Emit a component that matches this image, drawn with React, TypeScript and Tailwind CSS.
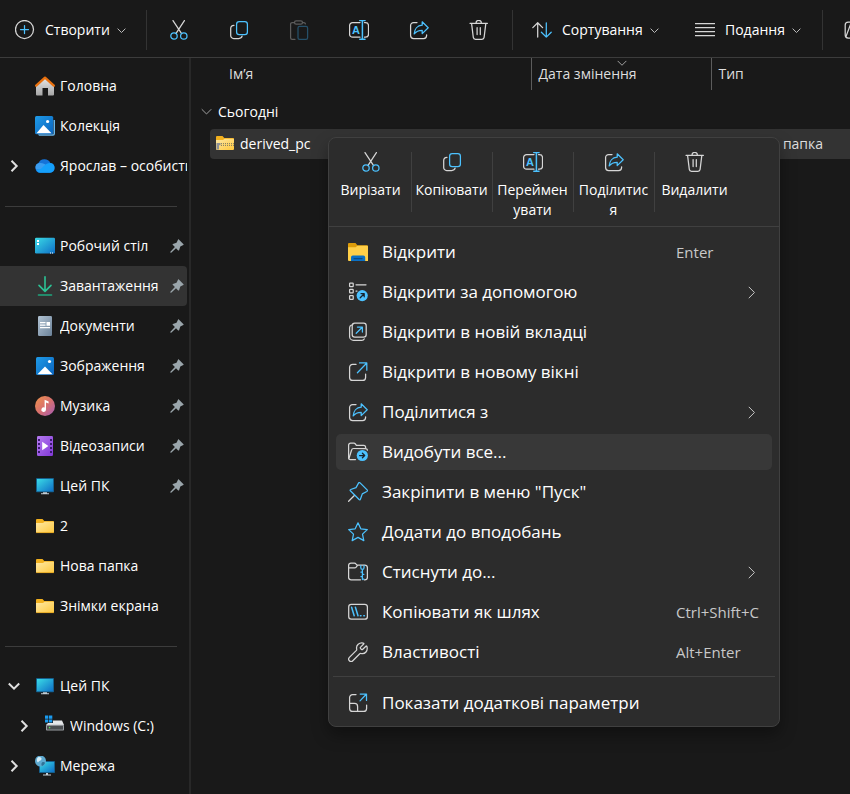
import type { ReactNode } from 'react'

const LIGHT = '#d6d6d6'
const BLUE = '#4cc2ff'

function Icon({ children, className = '' }: { children: ReactNode; className?: string }) {
  return (
    <svg
      viewBox="0 0 20 20"
      className={`size-5 shrink-0 ${className}`}
      fill="none"
      strokeWidth="1.25"
      strokeLinecap="round"
      strokeLinejoin="round"
      aria-hidden="true"
    >
      {children}
    </svg>
  )
}

function Chevron({ className = '' }: { className?: string }) {
  return (
    <svg viewBox="0 0 12 12" className={`shrink-0 ${className}`} fill="none" stroke="currentColor" aria-hidden="true">
      <path d="M.8 3.5L6 8.700l5.200-5.200" vectorEffect="non-scaling-stroke" />
    </svg>
  )
}

/* ---------- Command icons ---------- */

const NewIcon = () => (
  <Icon>
    <circle cx="9.5" cy="9.5" r="9" stroke={LIGHT} />
    <path d="M9.5 5.5v8M5.5 9.5h8" stroke={BLUE} />
  </Icon>
)

const CutIcon = () => (
  <Icon>
    <path d="M4 .6l8.6 13M15.4.6l-8.5 13" stroke={LIGHT} />
    <circle cx="5" cy="16" r="3.2" stroke={BLUE} />
    <circle cx="14.8" cy="16" r="3.2" stroke={BLUE} />
  </Icon>
)

const CopyIcon = () => (
  <Icon>
    <path d="M5 5.3C3 5.4 1.7 6.6 1.7 8.5v7a3 3 0 0 0 3 3h5c1.8 0 3.1-.9 3.4-2.3" stroke={LIGHT} />
    <rect x="7.6" y="1.6" width="10.8" height="13" rx="2.6" stroke={BLUE} />
  </Icon>
)

const PasteIcon = () => (
  <Icon>
    <path d="M5.5 2.5H3.2a1.6 1.6 0 0 0-1.6 1.6v13.6a1.6 1.6 0 0 0 1.6 1.6H6M13.5 2.5h1.3c.9 0 1.5.6 1.6 1.4" stroke="#5c5c5c" />
    <rect x="5.5" y=".8" width="8" height="3.2" rx="1.6" stroke="#5c5c5c" />
    <rect x="9" y="6.4" width="9.6" height="12.9" rx="1.6" stroke="#265069" />
  </Icon>
)

const RenameIcon = () => (
  <Icon>
    <path d="M11 2.6H3.6a3 3 0 0 0-3 3v8.6a3 3 0 0 0 3 3H11M15.5 2.6h1a3 3 0 0 1 3 3v8.6a3 3 0 0 1-3 3h-1" stroke={LIGHT} />
    <path d="M13.4.6v18.6M10.8.6h5.2M10.8 19.2h5.2" stroke={BLUE} strokeWidth="1.5" />
    <text x="3" y="14" fontSize="11" fontWeight="bold" fill={BLUE} fontFamily="Liberation Sans, sans-serif">A</text>
  </Icon>
)

const ShareIcon = () => (
  <Icon>
    <path d="M8 2.5H4.6a3 3 0 0 0-3 3v10a3 3 0 0 0 3 3h10a3 3 0 0 0 3-3v-.7" stroke={LIGHT} />
    <path d="M13.2 1.8l6 5.9-6 5.9v-3.3c-3.4 0-6 .9-8 3.6C5.4 9 8.4 5.5 13.2 5.2z" stroke={BLUE} />
  </Icon>
)

const DeleteIcon = () => (
  <Icon>
    <path d="M1 3.3h17.4M7 3.1a2.7 2.7 0 0 1 5.4 0M2.6 3.6l1.7 13.8a2.2 2.2 0 0 0 2.2 1.9h6.4a2.2 2.2 0 0 0 2.2-1.9l1.7-13.8M8.1 7.6v7M11.3 7.6v7" stroke={LIGHT} />
  </Icon>
)

const SortIcon = () => (
  <Icon>
    <path d="M5.7 17V2.8M.8 7.6l4.9-4.9 4.9 4.9" stroke={LIGHT} />
    <path d="M14.3 2.8V17M9.4 12.2l4.9 4.9 4.9-4.9" stroke={BLUE} />
  </Icon>
)

const ViewIcon = () => (
  <Icon>
    <path d="M.5 3.5h19M.5 7.5h19M.5 11.5h19M.5 15.5h19" stroke={LIGHT} />
  </Icon>
)

const PreviewIcon = () => (
  <Icon>
    <rect x="1.2" y="2" width="17" height="16" rx="3" stroke={LIGHT} />
    <path d="M2 16.5L6.5 4.5l4 7" stroke={LIGHT} />
  </Icon>
)

/* ---------- Context menu icons ---------- */

const ExplorerIcon = () => (
  <Icon>
    <path d="M0 2a1 1 0 0 1 1-1h6.5l1.8 2.2H19a1 1 0 0 1 1 1V9H0z" fill="#dd9c0a" />
    <path d="M0 5.2h7.6l1.8-1.5H19a1 1 0 0 1 1 1V19H1a1 1 0 0 1-1-1z" fill="#ffcf48" />
    <path d="M3 19v-3.600a1.800 1.800 0 0 1 1.800-1.800h10.600a1.800 1.800 0 0 1 1.800 1.800V19z" fill="#0b70c4" />
    <path d="M6 16.600h8" stroke="#0a4a86" />
  </Icon>
)

const OpenWithIcon = () => (
  <Icon>
    <g stroke={LIGHT}>
      <rect x="1.600" y="1" width="3.600" height="3.600" rx=".6" />
      <rect x="1.600" y="7.300" width="3.600" height="3.600" rx=".6" />
      <rect x="1.600" y="13.700" width="3.600" height="3.600" rx=".6" />
      <path d="M8 2.800h10M8 9.100h1" />
    </g>
    <circle cx="14.200" cy="13.600" r="5.600" fill={BLUE} />
    <path d="M12.200 15.800l4-4M13 11.600h3.200v3.200" stroke="#16222c" />
  </Icon>
)

const NewTabIcon = () => (
  <Icon>
    <rect x="4.200" y="1.200" width="14" height="14" rx="2.600" stroke={LIGHT} />
    <path d="M3.400 3.200c-1.100.4-1.800 1.300-1.800 2.600v8.600a3.900 3.900 0 0 0 3.900 3.900h8.300c1.200 0 2-.5 2.400-1.400" stroke={LIGHT} />
    <path d="M8.200 11.300l6-6M9.400 5h5v5" stroke={BLUE} />
  </Icon>
)

const NewWindowIcon = () => (
  <Icon>
    <path d="M8 2.400H4.600a3 3 0 0 0-3 3v10a3 3 0 0 0 3 3h10a3 3 0 0 0 3-3V12" stroke={LIGHT} />
    <path d="M9.400 10.800l9.200-9.600M11.500.9h7.300v7.300" stroke={BLUE} />
  </Icon>
)

const ExtractIcon = () => (
  <Icon>
    <path d="M7.500 17.600H2.200a1.600 1.600 0 0 1-1.600-1.600V3.200a2 2 0 0 1 2-2h3.200c.7 0 1.200.3 1.600.8l1 1.300h7.200a2 2 0 0 1 2 2v.8" stroke={LIGHT} />
    <path d="M1 16.200L3.600 8a2 2 0 0 1 1.900-1.500h11.800c1.300 0 2.100.6 2.100 1.700" stroke={LIGHT} />
    <circle cx="14.300" cy="13.500" r="5.600" fill={BLUE} />
    <path d="M11.600 13.500h5M14.400 11.200l2.300 2.300-2.300 2.300" stroke="#16222c" />
  </Icon>
)

const PinOutlineIcon = () => (
  <Icon>
    <path d="M.6 19.300l6-6" stroke={LIGHT} />
    <path d="M12.100.9l7 7c.6.6.4 1.200-.3 1.600l-4.500 2.400-1.900 5.300c-.3.7-.8.8-1.300.3L2.400 8.800c-.5-.5-.4-1.100.3-1.300L8 5.600 10.500 1.100c.4-.7 1-.8 1.600-.2z" stroke={BLUE} />
  </Icon>
)

const StarIcon = () => (
  <Icon>
    <path d="M10 .8l2.800 6 6.500.8-4.800 4.500 1.300 6.500L10 15.400l-5.800 3.200 1.300-6.500L.7 7.600l6.500-.8z" stroke={BLUE} />
  </Icon>
)

const CompressIcon = () => (
  <Icon>
    <path d="M12.500 17.800H3.200a2.600 2.600 0 0 1-2.600-2.600V3.600A2.400 2.400 0 0 1 3 1.200h3.300c.8 0 1.400.3 1.800.9l.9 1.100h7.800a2.600 2.600 0 0 1 2.600 2.600v9.400a2.600 2.600 0 0 1-2.600 2.600h-.6M.8 5.900h5.800c.7 0 1.200-.3 1.600-.8l1.300-1.700" stroke={LIGHT} />
    <path d="M12.800 3.500v2.300a1.600 1.600 0 0 0 3.200 0V3.500M14.400 7.500v10M12.900 10h1.500M14.400 12.300h1.500M12.900 14.600h1.500M14.400 17h1.500" stroke={BLUE} />
  </Icon>
)

const PathIcon = () => (
  <Icon>
    <rect x=".7" y="2.400" width="18.700" height="14.800" rx="2.600" stroke={LIGHT} />
    <path d="M3.600 5.200l2.600 8.600M7.400 5.200l2.600 8.600M12.400 13.800h.6M15.800 13.800h.6" stroke={BLUE} strokeWidth="1.500" />
  </Icon>
)

const WrenchIcon = () => (
  <Icon>
    <path d="M17.900 4.200l-3.100 3.100c-.5.5-1 .5-1.500 0l-.7-.7c-.5-.5-.5-1 0-1.500l3.100-3.100c.4-.4.200-.8-.3-.9-3.900-1-7.700 2-6.700 6.100.1.500 0 .8-.3 1.200l-7 7a2.400 2.400 0 0 0 3.400 3.400l7-7c.4-.4.7-.5 1.200-.3 4.100 1.100 7.200-2.800 5.900-7-.2-.5-.6-.7-1-.3z" stroke={LIGHT} />
  </Icon>
)

const MoreOptionsIcon = () => (
  <Icon>
    <path d="M8 1.600H4.600a3 3 0 0 0-3 3v10.800a3 3 0 0 0 3 3h11a3 3 0 0 0 3-3V12M1.600 10.400h5a3 3 0 0 1 3 3v5" stroke={LIGHT} />
    <path d="M12 7.900l6.300-6.600M12.200 1.100h6.300v6.300" stroke={BLUE} />
  </Icon>
)

/* ---------- Navigation pane icons ---------- */

const HomeIcon = () => (
  <Icon>
    <defs>
      <linearGradient id="wall" x1="0" y1="0" x2="0" y2="1">
        <stop stopColor="#e8e8e8" />
        <stop offset="1" stopColor="#a6a6a6" />
      </linearGradient>
    </defs>
    <path d="M1 9.500L10 1.500l9 8V18.500a1 1 0 0 1-1 1h-5V12H7.500v7.500H2a1 1 0 0 1-1-1z" fill="url(#wall)" />
    <path d="M1.200 9.600L10 1.700l8.800 7.900" stroke="#e8700e" strokeWidth="2.400" />
  </Icon>
)

const GalleryIcon = () => (
  <Icon>
    <path d="M4 19.800h14a2 2 0 0 0 2-2V4h-1.500v14.200H3z" fill="#69b7ea" />
    <rect width="18.200" height="18.200" rx="1.500" fill="url(#sky)" />
    <path d="M1.500 17.300L8.500 9l8 8.300z" fill="#fff" />
    <circle cx="12.600" cy="5.500" r="1.600" fill="#fff" />
  </Icon>
)

const PicturesIcon = () => (
  <Icon>
    <defs>
      <linearGradient id="sky" x1="0" y1="0" x2="1" y2="1">
        <stop stopColor="#1f9be8" />
        <stop offset="1" stopColor="#0a63bd" />
      </linearGradient>
    </defs>
    <rect x="1" y="1" width="18" height="18" rx="1.500" fill="url(#sky)" />
    <path d="M2.500 18.200L10 10.400l7.500 7.800z" fill="#fff" />
    <circle cx="14.500" cy="5.500" r="1.600" fill="#fff" />
  </Icon>
)

const CloudIcon = () => (
  <Icon>
    <path d="M5 16.800A5 5 0 0 1 3.300 7.300 6.600 6.600 0 0 1 15.400 6.900 5 5 0 0 1 15 16.800z" fill="#1573d8" />
    <path d="M1.200 13.600C-.5 10.500 1 8 3.300 7.300c3.700-.8 6.500.7 8.200 2.200L7.500 14z" fill="#3b9df0" />
    <path d="M5 16.800c-1.800-.2-3-1.200-3.800-3.200 2.500.8 4.800-.5 6.800-2.800 2.200-2.500 4.500-4 7.400-3.900A5 5 0 0 1 15 16.800z" fill="#15a0fb" />
  </Icon>
)

const DesktopIcon = () => (
  <Icon>
    <defs>
      <linearGradient id="screen" x1="0" y1="0" x2="1" y2="1">
        <stop stopColor="#3adbe6" />
        <stop offset="1" stopColor="#0f6fc6" />
      </linearGradient>
    </defs>
    <rect y="1.800" width="20" height="15.600" rx="1.200" fill="url(#screen)" />
    <path d="M2 4h2v2H2zM2 7h2v2H2zM15 16.500h1v1h-1zM17 16.500h1v1h-1z" fill="#fff" />
  </Icon>
)

const DownloadsIcon = () => (
  <Icon>
    <g stroke="#2cc295" strokeWidth="1.600">
      <path d="M10 .8v14M4 9.400l6 6 6-6" />
      <path d="M3.500 19h13" stroke="#1fa87f" />
    </g>
  </Icon>
)

const DocumentsIcon = () => (
  <Icon>
    <defs>
      <linearGradient id="sheet" x1="0" y1="0" x2="1" y2="1">
        <stop stopColor="#b2c3d3" />
        <stop offset="1" stopColor="#6a8198" />
      </linearGradient>
    </defs>
    <rect x="3" width="14" height="20" rx="1.200" fill="url(#sheet)" />
    <path d="M5 6h5.500v1.200H5zM5 8.500h5.500v1.200H5zM11.500 6H15v3.800h-3.500zM5 11h10v1.200H5z" fill="#fff" />
  </Icon>
)

const MusicIcon = () => (
  <Icon>
    <defs>
      <linearGradient id="disc" x1="0" y1="0" x2="1" y2="1">
        <stop stopColor="#f0954a" />
        <stop offset=".5" stopColor="#d8706d" />
        <stop offset="1" stopColor="#a45cb8" />
      </linearGradient>
    </defs>
    <circle cx="10" cy="10" r="10" fill="url(#disc)" />
    <path d="M9.600 3.800l4 1.600v2.200l-2.600-1v7a2.300 2.300 0 1 1-1.400-2.100z" fill="#fff" />
  </Icon>
)

const VideosIcon = () => (
  <Icon>
    <defs>
      <linearGradient id="film" x1="0" y1="0" x2="1" y2="1">
        <stop stopColor="#b57bf0" />
        <stop offset="1" stopColor="#8238d8" />
      </linearGradient>
    </defs>
    <rect x="2" width="16" height="20" rx="1.200" fill="url(#film)" />
    <path d="M4 3v16M16 3v16" stroke="#3c1a70" strokeWidth="2" strokeDasharray="2 2" strokeLinecap="butt" />
    <path d="M7.200 5.800v8.400l6.200-4.200z" fill="#fff" />
  </Icon>
)

const PcIcon = () => (
  <Icon>
    <rect x="1" y="2" width="18" height="14.300" rx=".8" fill="#155f8c" />
    <rect x="2" y="3" width="16" height="12.300" fill="url(#screen)" />
    <path d="M8 16.300h4v1h2v.9H6v-.9h2z" fill="#c3ced6" />
  </Icon>
)

const FolderIcon = () => (
  <Icon>
    <defs>
      <linearGradient id="folder" x1="0" y1="0" x2="1" y2="1">
        <stop stopColor="#ffe9a6" />
        <stop offset="1" stopColor="#ffc83d" />
      </linearGradient>
    </defs>
    <path d="M1 4a1 1 0 0 1 1-1h5.500l1.800 2H18a1 1 0 0 1 1 1v4H1z" fill="#f2b01e" />
    <path d="M1 7h7l1.700-1.300H19v10.300a1 1 0 0 1-1 1H2a1 1 0 0 1-1-1z" fill="url(#folder)" />
    <path d="M1.500 16.600h17" stroke="#e0a11c" strokeWidth=".8" />
  </Icon>
)

const ZipIcon = () => (
  <Icon>
    <path d="M1 3a1 1 0 0 1 1-1h5.500l1.800 2H18a1 1 0 0 1 1 1v4H1z" fill="#f2b01e" />
    <path d="M1 6h7l1.700-1.300H19v10.300a1 1 0 0 1-1 1H2a1 1 0 0 1-1-1z" fill="url(#folder)" />
    <path d="M6 9.500h13M6 11.300h13" stroke="#8c8463" strokeWidth="1.200" strokeDasharray="1 1" strokeLinecap="butt" />
    <path d="M1.500 9h4v2.200H4v4.300H1.500z" fill="#8d9196" />
  </Icon>
)

const DriveIcon = () => (
  <Icon className="overflow-visible">
    <path d="M0-.5h3.300v3.200H0zM4-.5h3.300v3.200H4zM0 3.400h3.300v3.200H0zM4 3.400h3.300v3.200H4z" fill="#1a9bf0" />
    <path d="M8 4.500h9L19 9H1l2-2h5z" fill="#e4e6e8" />
    <rect x="1" y="8.800" width="18" height="5.800" rx=".8" fill="#9b9fa3" />
    <rect x="2" y="9.800" width="16" height="3.800" fill="#4a4d50" />
    <circle cx="4.600" cy="11.600" r=".8" fill="#5be35b" />
  </Icon>
)

const NetworkIcon = () => (
  <Icon>
    <rect x="4" y="5" width="16" height="12" rx=".8" fill="#155f8c" />
    <rect x="5" y="6" width="14" height="10" fill="url(#screen)" />
    <path d="M11 17h2v1.500h3v1H8v-1h3z" fill="#c3ced6" />
    <circle cx="5.500" cy="5" r="5.500" fill="#5ea9cf" />
    <path d="M3 1.200c2-.8 4 .2 3.500 2S3.800 4.500 3 6.500C1.600 5.400 1.200 2.600 3 1.200z" fill="#d5edf8" />
    <path d="M7 6.500c1-.8 2.600-.4 3 .2-.5 1.700-1.600 2.800-3 3.200-.8-1-.8-2.500 0-3.400z" fill="#2f7397" />
  </Icon>
)

const PinIcon = () => (
  <svg viewBox="0 0 14 14" className="w-[14px] h-[14px] shrink-0" fill="#9aa5ab" aria-hidden="true">
    <path d="M8.800.5l4.700 4.700c.3.400.2.700-.2.900l-3 1.500-1.200 3.600c-.2.500-.6.500-.9.200L6 9.200 1.200 13.800.2 13.600.4 12.700 4.900 8 2.700 5.800c-.3-.3-.3-.7.2-.9l3.600-1.200L8 .7c.2-.4.5-.5.8-.2z" />
  </svg>
)

/* ---------- Toolbar ---------- */

const toolbarActions = [
  { label: 'Вирізати', icon: <CutIcon /> },
  { label: 'Копіювати', icon: <CopyIcon /> },
  { label: 'Вставити', icon: <PasteIcon />, disabled: true },
  { label: 'Перейменувати', icon: <RenameIcon /> },
  { label: 'Поділитися', icon: <ShareIcon /> },
  { label: 'Видалити', icon: <DeleteIcon /> },
]

function ToolbarMenu({ icon, label, className }: { icon: ReactNode; label: string; className: string }) {
  return (
    <button type="button" className={`flex items-center gap-[10px] h-10 shrink-0 whitespace-nowrap ${className}`}>
      {icon}
      <span className="flex items-center gap-[7px]">
        {label}
        <Chevron className="size-[9px] text-[#bdbdbd]" />
      </span>
    </button>
  )
}

const Divider = () => <div className="w-px h-10 shrink-0 bg-[#333333]" />

function Toolbar() {
  return (
    <header className="flex items-center h-[58px] pt-[3px] overflow-hidden border-b border-[#3c3c3c] text-sm text-white">
      <ToolbarMenu icon={<NewIcon />} label="Створити" className="w-[146px] pl-[15px]" />
      <Divider />
      <div className="flex shrink-0 pl-[2px] pr-[3px]">
        {toolbarActions.map((action) => (
          <button
            key={action.label}
            type="button"
            aria-label={action.label}
            disabled={action.disabled}
            className="flex items-center justify-center w-[60px] h-10"
          >
            {action.icon}
          </button>
        ))}
      </div>
      <Divider />
      <ToolbarMenu icon={<SortIcon />} label="Сортування" className="w-[163px] pl-[19px]" />
      <ToolbarMenu icon={<ViewIcon />} label="Подання" className="w-[146px] pl-[19px]" />
      <Divider />
      <button type="button" aria-label="Перегляд" className="flex items-center h-10 shrink-0 pl-[21px]">
        <PreviewIcon />
      </button>
    </header>
  )
}

/* ---------- Navigation pane ---------- */

type NavItem = {
  label: string
  icon: ReactNode
  pinned?: boolean
  selected?: boolean
  expand?: 'open' | 'closed'
  nested?: boolean
}

const navGroups: NavItem[][] = [
  [
    { label: 'Головна', icon: <HomeIcon /> },
    { label: 'Колекція', icon: <GalleryIcon /> },
    { label: 'Ярослав – особистий', icon: <CloudIcon />, expand: 'closed' },
  ],
  [
    { label: 'Робочий стіл', icon: <DesktopIcon />, pinned: true },
    { label: 'Завантаження', icon: <DownloadsIcon />, pinned: true, selected: true },
    { label: 'Документи', icon: <DocumentsIcon />, pinned: true },
    { label: 'Зображення', icon: <PicturesIcon />, pinned: true },
    { label: 'Музика', icon: <MusicIcon />, pinned: true },
    { label: 'Відеозаписи', icon: <VideosIcon />, pinned: true },
    { label: 'Цей ПК', icon: <PcIcon />, pinned: true },
    { label: '2', icon: <FolderIcon /> },
    { label: 'Нова папка', icon: <FolderIcon /> },
    { label: 'Знімки екрана', icon: <FolderIcon /> },
  ],
  [
    { label: 'Цей ПК', icon: <PcIcon />, expand: 'open' },
    { label: 'Windows (C:)', icon: <DriveIcon />, expand: 'closed', nested: true },
    { label: 'Мережа', icon: <NetworkIcon />, expand: 'closed' },
  ],
]

function NavRow({ item }: { item: NavItem }) {
  return (
    <li>
      <button
        type="button"
        className={`flex items-center w-full h-10 text-left rounded-r-sm ${item.selected ? 'bg-[#333333]' : ''} ${item.nested ? 'pl-[10px]' : ''}`}
      >
        <span className="flex w-[35px] shrink-0 pl-2 text-[#e0e0e0]">
          {item.expand && (
            <Chevron className={`size-3 stroke-2 ${item.expand === 'closed' ? '-rotate-90' : ''}`} />
          )}
        </span>
        {item.icon}
        <span className="flex-1 min-w-0 ml-[5px] overflow-hidden whitespace-nowrap">{item.label}</span>
        {item.pinned && (
          <span className="shrink-0 pr-[3px]">
            <PinIcon />
          </span>
        )}
      </button>
    </li>
  )
}

function NavPane() {
  return (
    <nav className="w-[191px] shrink-0 pt-2 pr-[2px] border-r-2 border-[#282828] text-sm text-white">
      {navGroups.map((group, i) => (
        <div key={i}>
          {i > 0 && (
            <div className="flex items-center h-10 pl-[5px] pr-[10px]">
              <hr className="w-full border-[#3c3c3c]" />
            </div>
          )}
          <ul>
            {group.map((item) => (
              <NavRow key={item.label} item={item} />
            ))}
          </ul>
        </div>
      ))}
    </nav>
  )
}

/* ---------- File list ---------- */

function FileList() {
  return (
    <table className="w-full table-fixed border-collapse text-left text-sm text-[#dedede]">
      <colgroup>
        <col className="w-[19px]" />
        <col className="w-[321px]" />
        <col className="w-[180px]" />
        <col />
      </colgroup>
      <thead>
        <tr className="h-8">
          <td />
          <th scope="col" className="pl-[19px] font-normal">Ім’я</th>
          <th scope="col" className="relative pl-[7px] font-normal border-l border-[#5c5c5c]">
            <Chevron className="absolute left-[85px] top-0 size-[10px] text-[#a0a0a0]" />
            Дата змінення
          </th>
          <th scope="col" className="pl-[7px] font-normal border-l border-[#5c5c5c]">Тип</th>
        </tr>
      </thead>
      <tbody>
        <tr className="h-[39px]">
          <th scope="rowgroup" colSpan={4} className="pl-[10px] pt-1 font-normal text-white">
            <span className="flex items-center gap-[6px]">
              <Chevron className="size-[11px] text-[#a0a0a0]" />
              Сьогодні
            </span>
          </th>
        </tr>
        <tr className="h-[30px]">
          <td />
          <td className="pl-[5px] rounded-l-sm bg-[#333333] text-white">
            <span className="flex items-center gap-[5px]">
              <ZipIcon />
              derived_pc
            </span>
          </td>
          <td className="bg-[#333333]" />
          <td className="pl-[7px] bg-[#333333] whitespace-nowrap">Стиснута папка</td>
        </tr>
      </tbody>
    </table>
  )
}

/* ---------- Context menu ---------- */

const quickActions = [
  { label: 'Вирізати', icon: <CutIcon /> },
  { label: 'Копіювати', icon: <CopyIcon /> },
  { label: 'Перейменувати', icon: <RenameIcon /> },
  { label: 'Поділитися', icon: <ShareIcon /> },
  { label: 'Видалити', icon: <DeleteIcon /> },
]

type MenuEntry = { label: string; icon: ReactNode; shortcut?: string; submenu?: boolean; active?: boolean }

const menuEntries: MenuEntry[] = [
  { label: 'Відкрити', icon: <ExplorerIcon />, shortcut: 'Enter' },
  { label: 'Відкрити за допомогою', icon: <OpenWithIcon />, submenu: true },
  { label: 'Відкрити в новій вкладці', icon: <NewTabIcon /> },
  { label: 'Відкрити в новому вікні', icon: <NewWindowIcon /> },
  { label: 'Поділитися з', icon: <ShareIcon />, submenu: true },
  { label: 'Видобути все...', icon: <ExtractIcon />, active: true },
  { label: 'Закріпити в меню "Пуск"', icon: <PinOutlineIcon /> },
  { label: 'Додати до вподобань', icon: <StarIcon /> },
  { label: 'Стиснути до...', icon: <CompressIcon />, submenu: true },
  { label: 'Копіювати як шлях', icon: <PathIcon />, shortcut: 'Ctrl+Shift+C' },
  { label: 'Властивості', icon: <WrenchIcon />, shortcut: 'Alt+Enter' },
]

function MenuRow({ entry }: { entry: MenuEntry }) {
  return (
    <button
      type="button"
      role="menuitem"
      className={`flex items-center w-full h-9 pl-3 rounded-[5px] text-left text-[17px] ${entry.active ? 'bg-[#383838]' : ''}`}
    >
      {entry.icon}
      <span className="flex-1 pl-[14px] whitespace-nowrap">{entry.label}</span>
      {entry.shortcut && (
        <span className="w-24 shrink-0 whitespace-nowrap text-[15px] text-[#c8c8c8]">{entry.shortcut}</span>
      )}
      {entry.submenu && <Chevron className="size-[13px] mr-[14px] -rotate-90 text-[#c8c8c8]" />}
    </button>
  )
}

function ContextMenu() {
  return (
    <div
      role="menu"
      className="absolute left-[137px] top-[79px] w-[452px] rounded-lg border border-[#404040] bg-[#2c2c2c] text-white shadow-[0_8px_16px_rgba(0,0,0,0.35)]"
    >
      <div className="flex h-[89px] pt-[14px] pl-px border-b border-[#404040]">
        {quickActions.map((action) => (
          <button
            key={action.label}
            type="button"
            role="menuitem"
            className="flex flex-col items-center w-[82px] -mr-px h-[60px] border-r border-[#404040] last:border-transparent"
          >
            {action.icon}
            <span className="w-[76px] mt-2 text-center text-sm leading-5 break-all">{action.label}</span>
          </button>
        ))}
      </div>
      <div className="flex flex-col gap-1 px-[7px] pt-[7px] pb-[6px]">
        {menuEntries.map((entry) => (
          <MenuRow key={entry.label} entry={entry} />
        ))}
      </div>
      <hr className="mx-1 border-[#404040]" />
      <div className="px-[7px] pt-2 pb-[5px]">
        <MenuRow entry={{ label: 'Показати додаткові параметри', icon: <MoreOptionsIcon /> }} />
      </div>
    </div>
  )
}

export default function App() {
  return (
    <div className="flex flex-col min-h-screen overflow-hidden bg-[#191919] font-['Open_Sans','Noto_Sans',sans-serif]">
      <Toolbar />
      <div className="flex flex-1">
        <NavPane />
        <main className="relative flex-1 min-w-0">
          <FileList />
          <ContextMenu />
        </main>
      </div>
    </div>
  )
}
